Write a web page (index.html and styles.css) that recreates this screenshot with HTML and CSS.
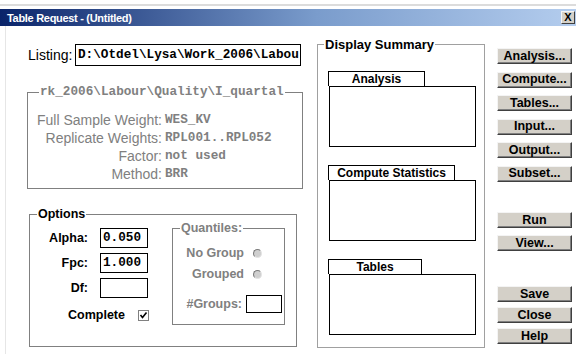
FILE: index.html
```html
<!DOCTYPE html>
<html lang="en">
<head>
    <meta charset="UTF-8">
    <title>Table Request</title>
    <link rel="stylesheet" href="styles.css">
</head>
<body>

<div class="window">
    <div class="frame-line"></div>

    <!-- title bar -->
    <div class="titlebar">
        <span class="title">Table Request - (Untitled)</span>
        <span class="close-box">X</span>
    </div>

    <div class="client">
        <!-- left side: listing, weights, options -->
        <div class="left">
            <div class="listing">
                <label>Listing:</label>
                <div class="field wide">D:\Otdel\Lysa\Work_2006\Labou</div>
            </div>

            <fieldset class="group weights">
                <legend>rk_2006\Labour\Quality\I_quartal</legend>
                <div class="row"><span class="key">Full Sample Weight:</span><span class="val">WES_KV</span></div>
                <div class="row"><span class="key">Replicate Weights:</span><span class="val">RPL001..RPL052</span></div>
                <div class="row"><span class="key">Factor:</span><span class="val">not used</span></div>
                <div class="row"><span class="key">Method:</span><span class="val">BRR</span></div>
            </fieldset>

            <fieldset class="group options">
                <legend>Options</legend>
                <div class="opt-body">
                    <div class="opt-fields">
                        <div class="opt-row"><label>Alpha:</label><div class="field num">0.050</div></div>
                        <div class="opt-row"><label>Fpc:</label><div class="field num">1.000</div></div>
                        <div class="opt-row"><label>Df:</label><div class="field num"></div></div>
                        <div class="complete">
                            <span>Complete</span>
                            <svg class="check" width="11" height="11" viewBox="0 0 11 11">
                                <rect x="0.5" y="0.5" width="10" height="10" fill="#fff" stroke="#808080"/>
                                <path d="M2.5 5 L4.5 7.5 L8.5 2.5" fill="none" stroke="#000" stroke-width="1.6"/>
                            </svg>
                        </div>
                    </div>

                    <fieldset class="group quantiles">
                        <legend>Quantiles:</legend>
                        <div class="q-row first"><span>No Group</span><span class="radio"></span></div>
                        <div class="q-row"><span>Grouped</span><span class="radio"></span></div>
                        <div class="q-row groups"><span>#Groups:</span><div class="field small"></div></div>
                    </fieldset>
                </div>
            </fieldset>
        </div>

        <!-- middle: display summary -->
        <fieldset class="group summary">
            <legend>Display Summary</legend>
            <div class="panel first">
                <div class="tab" style="width: 97px">Analysis</div>
                <div class="panel-box"></div>
            </div>
            <div class="panel">
                <div class="tab" style="width: 127px">Compute Statistics</div>
                <div class="panel-box"></div>
            </div>
            <div class="panel">
                <div class="tab" style="width: 94px">Tables</div>
                <div class="panel-box"></div>
            </div>
        </fieldset>

        <!-- right: buttons -->
        <div class="buttons">
            <button>Analysis...</button>
            <button class="step">Compute...</button>
            <button class="step">Tables...</button>
            <button class="step">Input...</button>
            <button class="step">Output...</button>
            <button class="step">Subset...</button>
            <button class="run">Run</button>
            <button class="view">View...</button>
            <button class="save">Save</button>
            <button class="tight">Close</button>
            <button class="tight">Help</button>
        </div>
    </div>
</div>

</body>
</html>
```

FILE: styles.css
```css
body {
    margin: 0;
    background-color: #fff;
    font-family: 'Liberation Sans', Arial, sans-serif;
    color: #000;
}

.window {
    width: 576px;
    height: 354px;
    overflow: hidden;
    padding-top: 4px;
    box-sizing: border-box;
}

.frame-line {
    height: 2px;
    background-color: #dcdcdc;
    margin-bottom: 3px;
}

.titlebar {
    height: 17px;
    display: flex;
    align-items: center;
    padding-left: 7px;
    background: linear-gradient(to right, #0a246a, #7a9ccc 55%, #b4cdee);
}

.title {
    color: #fff;
    font-weight: bold;
    font-size: 11px;
    letter-spacing: -0.3px;
}

.close-box {
    margin-left: auto;
    margin-right: 1px;
    width: 14px;
    height: 13px;
    box-sizing: border-box;
    background-color: #d4d0c8;
    border: 1px solid;
    border-color: #f4f4f4 #404040 #404040 #f4f4f4;
    font-size: 11px;
    font-weight: bold;
    line-height: 11px;
    text-align: center;
}

.client {
    margin-left: 5px;
    border-left: 1px solid #e6e6e6;
    height: 328px;
    padding-left: 21px;
    display: flex;
    align-items: flex-start;
}

.left {
    width: 276px;
    margin-top: 18px;
}

.field {
    box-sizing: border-box;
    border: 1px solid #000;
    background-color: #fff;
    font-family: 'Liberation Mono', monospace;
    font-weight: bold;
    font-size: 12.7px;
    padding-left: 2px;
}

.listing {
    display: flex;
    align-items: center;
    height: 22px;
}

.listing label {
    width: 47px;
    margin-left: 1px;
    font-size: 14px;
}

.field.wide {
    width: 226px;
    height: 22px;
    line-height: 20px;
}

.group {
    margin: 0;
    padding: 0;
    min-width: 0;
    box-sizing: border-box;
    border: 1px solid #808080;
}

.group legend {
    padding: 0 1px;
    line-height: 14px;
}

.weights {
    width: 276px;
    margin-top: 19px;
    padding: 12px 0 5px 0;
}

.weights legend {
    margin-left: 11px;
    font-family: 'Liberation Mono', monospace;
    font-weight: bold;
    font-size: 12.7px;
    color: #808080;
}

.row {
    display: flex;
    line-height: 18px;
    color: #808080;
}

.row .key {
    width: 134px;
    text-align: right;
    font-size: 14px;
}

.row .val {
    margin-left: 3px;
    font-family: 'Liberation Mono', monospace;
    font-weight: bold;
    font-size: 12.7px;
}

.options {
    width: 268px;
    margin-top: 18px;
    margin-left: 2px;
    padding-bottom: 21px;
}

.options legend,
.quantiles legend {
    margin-left: 7px;
    font-weight: bold;
    font-size: 12.5px;
}

.opt-body {
    display: flex;
    align-items: flex-start;
}

.opt-fields {
    width: 142px;
    padding-top: 7px;
}

.opt-row {
    display: flex;
    align-items: center;
    height: 20px;
}

.opt-row + .opt-row {
    margin-top: 5px;
}

.opt-row label {
    width: 58px;
    margin-right: 12px;
    text-align: right;
    font-weight: bold;
    font-size: 12.5px;
}

.field.num {
    width: 48px;
    height: 20px;
    line-height: 18px;
}

.complete {
    display: flex;
    align-items: center;
    height: 16px;
    margin-top: 9px;
    padding-left: 38px;
    font-weight: bold;
    font-size: 12.5px;
}

.complete .check {
    margin-left: 13px;
}

.quantiles {
    width: 113px;
    padding: 10px 0 11px 0;
    color: #808080;
}

.q-row {
    display: flex;
    justify-content: flex-end;
    align-items: center;
    height: 16px;
    padding-right: 22px;
    margin-top: 5px;
    font-weight: bold;
    font-size: 12.5px;
}

.q-row.first {
    margin-top: 0;
}

.radio {
    width: 9px;
    height: 9px;
    margin-left: 9px;
    box-sizing: border-box;
    border-radius: 50%;
    background-color: #cfcfcf;
    border: 1px solid;
    border-color: #7a7a7a #e4e4e4 #e4e4e4 #7a7a7a;
}

.q-row.groups {
    height: 18px;
    margin-top: 13px;
    padding-right: 2px;
}

.field.small {
    width: 36px;
    height: 18px;
    margin-left: 4px;
}

.summary {
    width: 168px;
    margin-top: 11px;
    margin-left: 14px;
    padding-bottom: 12px;
    border-color: #a0a0a0;
}

.summary legend {
    margin-left: 6px;
    font-weight: bold;
    font-size: 13px;
    line-height: 15px;
}

.panel {
    margin-top: 18px;
    margin-left: 10px;
}

.panel.first {
    margin-top: 19px;
}

.tab {
    height: 15px;
    box-sizing: border-box;
    border: 1px solid #000;
    border-bottom: none;
    text-align: center;
    font-weight: bold;
    font-size: 12px;
    line-height: 14px;
}

.panel-box {
    margin-left: 1px;
    width: 147px;
    height: 61px;
    box-sizing: border-box;
    border: 1px solid #000;
}

.buttons {
    width: 75px;
    margin-top: 22px;
    margin-left: 12px;
    display: flex;
    flex-direction: column;
}

button {
    height: 16px;
    width: 75px;
    padding: 0;
    box-sizing: border-box;
    background-color: #d4d0c8;
    border: 1px solid;
    border-color: #f4f4f4 #404040 #404040 #f4f4f4;
    box-shadow: inset -1px -1px #808080;
    font-family: 'Liberation Sans', Arial, sans-serif;
    font-weight: bold;
    font-size: 12.5px;
    line-height: 13px;
    color: #000;
}

button.step {
    margin-top: 7.5px;
}

button.run {
    margin-top: 30.5px;
}

button.view {
    margin-top: 7px;
}

button.save {
    margin-top: 35px;
}

button.tight {
    margin-top: 5px;
}
```
